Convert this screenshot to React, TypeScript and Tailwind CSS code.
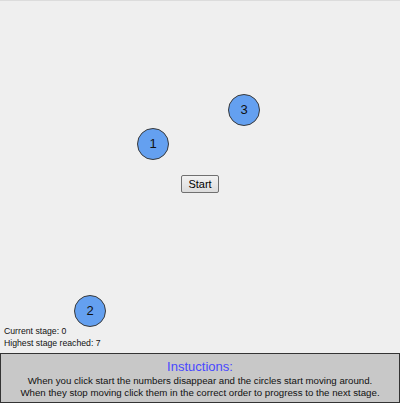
const circles = [
  { n: 1, x: 137, y: 127 },
  { n: 3, x: 228, y: 93 },
  { n: 2, x: 74, y: 294 },
];

export default function App() {
  return (
    <div className="w-[402px] h-[403px] bg-white overflow-hidden" style={{ fontFamily: '"Liberation Sans", Arial, sans-serif' }}>
      <div className="w-[400px] h-[403px] bg-[#efefef] border-t border-[#dcdcdc] flex flex-col">
        <div className="relative h-[324px]">
          {circles.map((c) => (
            <div
              key={c.n}
              className="absolute w-[32px] h-[32px] rounded-full bg-[#64a0f0] border border-[#3a3a3a] flex items-center justify-center text-[13px] text-[#111]"
              style={{ left: c.x, top: c.y }}
            >
              {c.n}
            </div>
          ))}
          <button className="absolute left-[181px] top-[174px] w-[38px] h-[18px] border border-[#707070] rounded-[2px] bg-gradient-to-b from-[#f2f2f2] to-[#dcdcdc] text-[11px] leading-none text-black">
            Start
          </button>
        </div>
        <div className="pl-[4px] text-[8.7px] leading-[12px] text-[#111]">
          <div>Current stage: 0</div>
          <div>Highest stage reached: 7</div>
        </div>
        <div className="mt-[4px] flex-1 bg-[#c8c8c8] border border-[#333] flex flex-col items-center">
          <div className="text-[13px] leading-[17px] text-[#4848ff] pt-[4px]">Instuctions:</div>
          <div className="text-[9.7px] leading-[12px] text-[#111] text-center">
            When you click start the numbers disappear and the circles start moving around.
            <br />
            When they stop moving click them in the correct order to progress to the next stage.
          </div>
        </div>
      </div>
    </div>
  );
}
